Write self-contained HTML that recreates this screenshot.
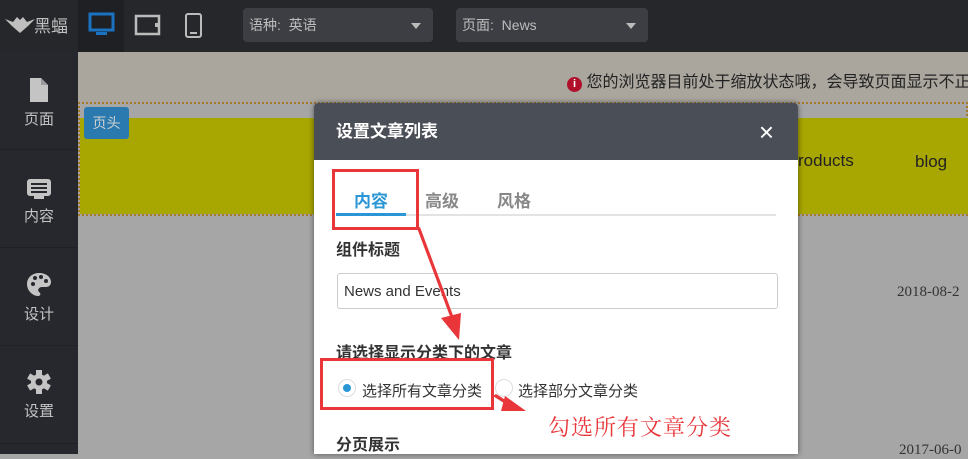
<!DOCTYPE html>
<html><head><meta charset="utf-8"><style>
*{margin:0;padding:0;box-sizing:border-box}
body{width:968px;height:454px;overflow:hidden;position:relative;background:#a6a6a6;font-family:"Liberation Sans","Noto Sans CJK SC",sans-serif}
.abs{position:absolute}
.top{left:0;top:0;width:968px;height:52px;background:#25272b}
.side{left:0;top:52px;width:78px;height:402px;background:#26282e}
.sitem{position:absolute;left:0;width:78px;height:98px;border-bottom:1px solid #1f2126;color:#c4c4c4;font-size:15px;text-align:center}
.sitem svg{display:block;margin:0 auto}
.sel{top:8px;height:34px;background:#3c3e43;border-radius:4px;color:#bdbdbd;font-size:14px;line-height:34px;padding-left:6px}
.sel:after{content:"";position:absolute;right:12px;top:15px;border:5px solid transparent;border-top:6px solid #bbb}
</style></head><body>
<div class="abs top"></div>
<svg class="abs" style="left:4px;top:14px" width="32" height="20"><path d="M1 5 L9 8 L13 3 L16 6 L19 3 L23 8 L31 5 L24 12 L16 19 L8 12 Z" fill="#bfbfbf"/></svg>
<div class="abs" style="left:34px;top:12px;color:#bfbfbf;font-size:17px;">黑蝠</div>
<div class="abs" style="left:78px;top:0;width:46px;height:52px;background:#1e2024"></div>
<svg class="abs" style="left:88px;top:12px" width="28" height="26" viewBox="0 0 28 26"><rect x="2" y="2" width="23" height="16" fill="none" stroke="#1a72c0" stroke-width="3"/><rect x="8" y="20" width="11" height="3" fill="#1a72c0"/></svg>
<svg class="abs" style="left:134px;top:14px" width="28" height="24"><rect x="2" y="2" width="23" height="18" fill="none" stroke="#bbb" stroke-width="2.5"/><rect x="21" y="9" width="3" height="4" fill="#bbb"/></svg>
<svg class="abs" style="left:184px;top:12px" width="20" height="28"><rect x="2" y="2" width="15" height="23" rx="2" fill="none" stroke="#bbb" stroke-width="2"/><rect x="6" y="20" width="7" height="2" fill="#bbb"/></svg>
<div class="abs sel" style="left:243px;width:190px">语种:&nbsp; 英语</div>
<div class="abs sel" style="left:456px;width:192px">页面:&nbsp; News</div>
<div class="abs side">
 <div class="sitem" style="top:0"><svg width="24" height="28" style="margin-top:24px"><path d="M3 2h11l7 7v17H3z" fill="#c4c4c4"/><path d="M14 2v7h7" fill="#9a9a9a"/></svg><div style="margin-top:4px">页面</div></div>
 <div class="sitem" style="top:98px"><svg width="26" height="24" style="margin-top:27px"><rect x="1" y="2" width="24" height="17" rx="3" fill="#c4c4c4"/><rect x="8" y="19" width="10" height="3" fill="#c4c4c4"/><rect x="5" y="6" width="16" height="2" fill="#26282e"/><rect x="5" y="10" width="16" height="2" fill="#26282e"/><rect x="5" y="14" width="16" height="2" fill="#26282e"/></svg><div style="margin-top:4px">内容</div></div>
 <div class="sitem" style="top:196px"><svg width="26" height="26" style="margin-top:24px"><path d="M13 1C6 1 1 6 1 12c0 7 6 12 11 12 3 0 3-3 1-4-2-2 0-5 3-5h4c3 0 5-2 5-5 0-5-5-9-12-9z" fill="#c4c4c4"/><circle cx="7" cy="12" r="2" fill="#26282e"/><circle cx="9" cy="6" r="2" fill="#26282e"/><circle cx="15" cy="5" r="2" fill="#26282e"/><circle cx="20" cy="9" r="2" fill="#26282e"/></svg><div style="margin-top:5px">设计</div></div>
 <div class="sitem" style="top:294px"><svg width="26" height="26" style="margin-top:23px"><g fill="#c4c4c4"><circle cx="13" cy="13" r="8"/><rect x="10" y="1" width="6" height="24"/><rect x="10" y="1" width="6" height="24" transform="rotate(60 13 13)"/><rect x="10" y="1" width="6" height="24" transform="rotate(120 13 13)"/></g><circle cx="13" cy="13" r="3.5" fill="#26282e"/></svg><div style="margin-top:5px">设置</div></div>
</div>
<div class="abs" style="left:78px;top:52px;width:890px;height:51px;background:#aaa69e"></div>
<div class="abs" style="left:567px;top:68px;font-size:16px;color:#222;white-space:nowrap"><span style="display:inline-block;width:15px;height:15px;border-radius:50%;background:#b0102a;color:#fff;font-size:11px;text-align:center;line-height:15px;font-weight:bold;vertical-align:0">i</span> 您的浏览器目前处于缩放状态哦，会导致页面显示不正常</div>
<div class="abs" style="left:78px;top:102px;width:890px;height:114px;border:2px dotted #a8782a;background:#a6a6a6"></div>
<div class="abs" style="left:80px;top:118px;width:888px;height:96px;background:#a8a600"></div>
<div class="abs" style="left:84px;top:107px;width:45px;height:32px;background:#2a7ab0;border-radius:3px;color:#d0d0d0;font-size:14px;line-height:32px;text-align:center">页头</div>
<div class="abs" style="left:798px;top:151px;font-size:17px;color:#222">roducts</div>
<div class="abs" style="left:915px;top:152px;font-size:17px;color:#222">blog</div>
<div class="abs" style="left:897px;top:284px;font-family:'Liberation Serif',serif;font-size:15px;color:#333">2018-08-2</div>
<div class="abs" style="left:899px;top:442px;font-family:'Liberation Serif',serif;font-size:15px;color:#333">2017-06-0</div>
<div class="abs" style="left:314px;top:103px;width:484px;height:351px;background:#fff;border-radius:4px 4px 0 0;box-shadow:0 0 6px rgba(0,0,0,.5);overflow:hidden">
 <div style="height:57px;background:#4a4e56;color:#fff;font-size:17px;font-weight:bold;line-height:58px;padding-left:22px">设置文章列表<span style="position:absolute;right:24px;top:0;font-weight:normal;font-size:26px">×</span></div>
 <div class="abs" style="left:22px;top:111px;width:440px;height:2px;background:#e3e3e3"></div>
 <div class="abs" style="left:22px;top:110px;width:70px;height:3px;background:#2b96d6"></div>
 <div class="abs" style="left:40px;top:84px;font-size:17px;font-weight:bold;color:#2b96d6">内容</div>
 <div class="abs" style="left:111px;top:84px;font-size:17px;font-weight:bold;color:#888">高级</div>
 <div class="abs" style="left:183px;top:84px;font-size:17px;font-weight:bold;color:#888">风格</div>
 <div class="abs" style="left:22px;top:133px;font-size:16px;font-weight:bold;color:#333">组件标题</div>
 <div class="abs" style="left:23px;top:170px;width:441px;height:36px;border:1px solid #ccc;border-radius:3px;font-size:15px;color:#333;line-height:36px;padding-left:6px">News and Events</div>
 <div class="abs" style="left:22px;top:236px;font-size:16px;font-weight:bold;color:#333">请选择显示分类下的文章</div>
 <div class="abs" style="left:24px;top:276px;width:18px;height:18px;border-radius:50%;border:1px solid #ddd;background:#fff"><div style="margin:4px;width:8px;height:8px;border-radius:50%;background:#2b96d6"></div></div>
 <div class="abs" style="left:48px;top:277px;font-size:15px;color:#333">选择所有文章分类</div>
 <div class="abs" style="left:181px;top:276px;width:18px;height:18px;border-radius:50%;border:1px solid #ddd"></div>
 <div class="abs" style="left:204px;top:277px;font-size:15px;color:#333">选择部分文章分类</div>
 <div class="abs" style="left:22px;top:328px;font-size:16px;font-weight:bold;color:#333">分页展示</div>
</div>
<div class="abs" style="left:332px;top:169px;width:87px;height:61px;border:3px solid #e8363a"></div>
<div class="abs" style="left:320px;top:358px;width:174px;height:52px;border:3px solid #e8363a"></div>
<svg class="abs" style="left:0;top:0" width="968" height="454"><g fill="#e8363a"><polygon points="417,228 420,227 454,318 451,319"/><polygon points="441,318 461,313 459,340"/><polygon points="493,396 496,394 512,404 510,407"/><polygon points="505,396 526,411 501,411"/></g></svg>
<div class="abs" style="left:548px;top:411px;font-family:'Noto Serif CJK SC',serif;font-size:22px;color:#e8363a;letter-spacing:1px">勾选所有文章分类</div>
</body></html>
